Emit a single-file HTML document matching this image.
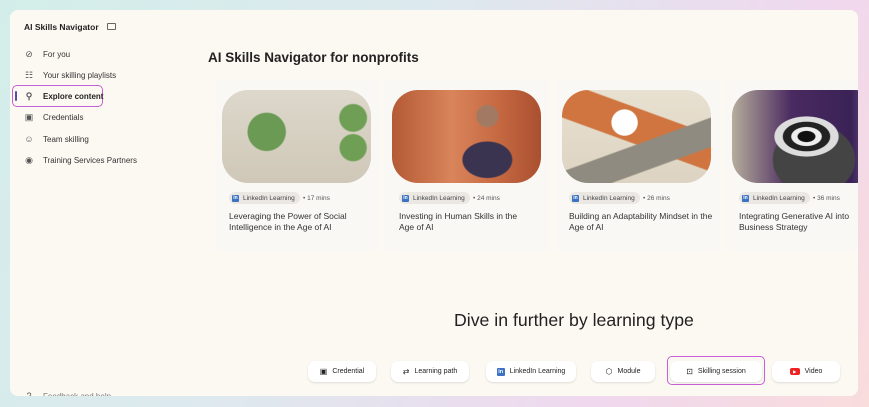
<!DOCTYPE html>
<html><head><meta charset="utf-8"><style>
*{box-sizing:border-box;margin:0;padding:0}
body{width:869px;height:407px;overflow:hidden;font-family:"Liberation Sans",sans-serif;background:linear-gradient(120deg,#d3eeea 0%,#dde9ee 40%,#f0d8ee 75%,#f9dcdc 100%);position:relative}
.panel{position:absolute;left:10px;top:10px;width:848px;height:386px;background:#fcf9f3;border-radius:8px;overflow:hidden}
.t{position:absolute;white-space:nowrap}
.nav{position:absolute;left:14px;font-size:8px;color:#333;display:flex;align-items:center}
.nav i{display:inline-block;width:10px;margin-right:9px;font-style:normal;font-size:9px;color:#555;text-align:center}
.card{position:absolute;top:69px;width:165px;height:172px;background:#faf8f5;border-radius:4px}
.img{position:absolute;left:7px;top:11px;width:149px;height:93px;border-radius:26px;overflow:hidden}
.pill{position:absolute;left:14px;top:113px;height:12px;padding:0 5px 0 3px;background:#ebe8e4;border-radius:6px;font-size:6.5px;color:#444;display:flex;align-items:center}
.pill b{display:inline-block;width:7px;height:7px;background:#3b72c4;border-radius:1px;margin-right:4px;color:#fff;font-size:5px;line-height:7px;text-align:center}
.mins{position:absolute;left:88px;top:116px;font-size:6.5px;color:#555}
.title{position:absolute;left:14px;top:132px;width:128px;font-size:8.5px;line-height:11px;color:#333}
.btn{position:absolute;top:351px;height:21px;background:#fff;border-radius:7px;box-shadow:0 1px 2px rgba(0,0,0,.12);font-size:7px;color:#222;display:flex;align-items:center;justify-content:center;gap:5px}
</style></head><body>
<div class="panel">
<div class="t" style="left:14px;top:12px;font-size:8.5px;font-weight:bold;color:#222">AI Skills Navigator</div>
<div class="t" style="left:97px;top:13px;width:9px;height:7px;border:1px solid #666;border-radius:1px"></div>
<div class="nav" style="top:39px"><i>⊘</i>For you</div>
<div class="nav" style="top:60px"><i>☷</i>Your skilling playlists</div>
<div class="t" style="left:2px;top:75px;width:91px;height:22px;border:1px solid #c85fd6;border-radius:5px"></div>
<div class="t" style="left:5px;top:81px;width:2px;height:10px;background:#5b4aa8;border-radius:1px"></div>
<div class="nav" style="top:81px;font-weight:bold;color:#222"><i>⚲</i>Explore content</div>
<div class="nav" style="top:102px"><i>▣</i>Credentials</div>
<div class="nav" style="top:124px"><i>☺</i>Team skilling</div>
<div class="nav" style="top:145px"><i>◉</i>Training Services Partners</div>
<div class="nav" style="top:381px;color:#777"><i>?</i>Feedback and help</div>

<div class="t" style="left:198px;top:40px;font-size:13.5px;font-weight:bold;color:#222">AI Skills Navigator for nonprofits</div>

<div class="card" style="left:205px"><div class="img" style="background:radial-gradient(circle at 30% 45%,#6b9a55 0 16%,transparent 17%),radial-gradient(circle at 88% 30%,#6f9f55 0 9%,transparent 10%),radial-gradient(circle at 88% 62%,#6f9f55 0 9%,transparent 10%),linear-gradient(#ddd8cb,#cfc8b8)"></div>
<div class="pill"><b>in</b>LinkedIn Learning</div><div class="mins">• 17 mins</div>
<div class="title">Leveraging the Power of Social Intelligence in the Age of AI</div></div>

<div class="card" style="left:375px"><div class="img" style="background:radial-gradient(ellipse at 64% 75%,#3a3450 0 18%,transparent 19%),radial-gradient(circle at 64% 28%,#a27a63 0 9%,transparent 10%),linear-gradient(90deg,#b45a35,#d9845a 40%,#c76a43 70%,#a9502f)"></div>
<div class="pill"><b>in</b>LinkedIn Learning</div><div class="mins">• 24 mins</div>
<div class="title" style="width:124px">Investing in Human Skills in the Age of AI</div></div>

<div class="card" style="left:545px"><div class="img" style="background:radial-gradient(circle at 42% 35%,#fff 0 12%,transparent 13%),linear-gradient(160deg,transparent 55%,#8f8b80 56%,#8f8b80 75%,transparent 76%),linear-gradient(200deg,transparent 30%,#d0753f 31%,#d0753f 55%,transparent 56%),linear-gradient(#e8e0d0,#ddd3c2)"></div>
<div class="pill"><b>in</b>LinkedIn Learning</div><div class="mins">• 26 mins</div>
<div class="title" style="width:145px">Building an Adaptability Mindset in the Age of AI</div></div>

<div class="card" style="left:715px"><div class="img" style="background:radial-gradient(ellipse at 50% 50%,#111 0 8%,#eee 9% 14%,#222 15% 22%,#ddd 23% 30%,transparent 31%),radial-gradient(ellipse at 55% 75%,#444 0 35%,transparent 36%),linear-gradient(90deg,#b6ad9c,#4a2a60 40%,#3a2256 80%,#7c6aa0)"></div>
<div class="pill"><b>in</b>LinkedIn Learning</div><div class="mins">• 36 mins</div>
<div class="title">Integrating Generative AI into Business Strategy</div></div>

<div class="t" style="left:444px;top:300px;font-size:17.7px;color:#222">Dive in further by learning type</div>

<div class="btn" style="left:298px;width:68px"><span style="font-size:8px">▣</span>Credential</div>
<div class="btn" style="left:381px;width:78px"><span style="font-size:8px">⇄</span>Learning path</div>
<div class="btn" style="left:476px;width:90px"><b style="display:inline-block;width:8px;height:8px;background:#3b72c4;border-radius:1px;color:#fff;font-size:5.5px;line-height:8px;text-align:center">in</b>LinkedIn Learning</div>
<div class="btn" style="left:581px;width:64px"><span style="font-size:8px">⬡</span>Module</div>
<div class="t" style="left:657px;top:346px;width:98px;height:29px;border:1px solid #c85fd6;border-radius:5px"></div>
<div class="btn" style="left:660px;width:92px"><span style="font-size:8px">⊡</span>Skilling session</div>
<div class="btn" style="left:762px;width:68px"><b style="display:inline-block;width:10px;height:7px;background:#e22;border-radius:2px;color:#fff;font-size:4px;line-height:7px;text-align:center">▶</b>Video</div>
</div>
</body></html>
